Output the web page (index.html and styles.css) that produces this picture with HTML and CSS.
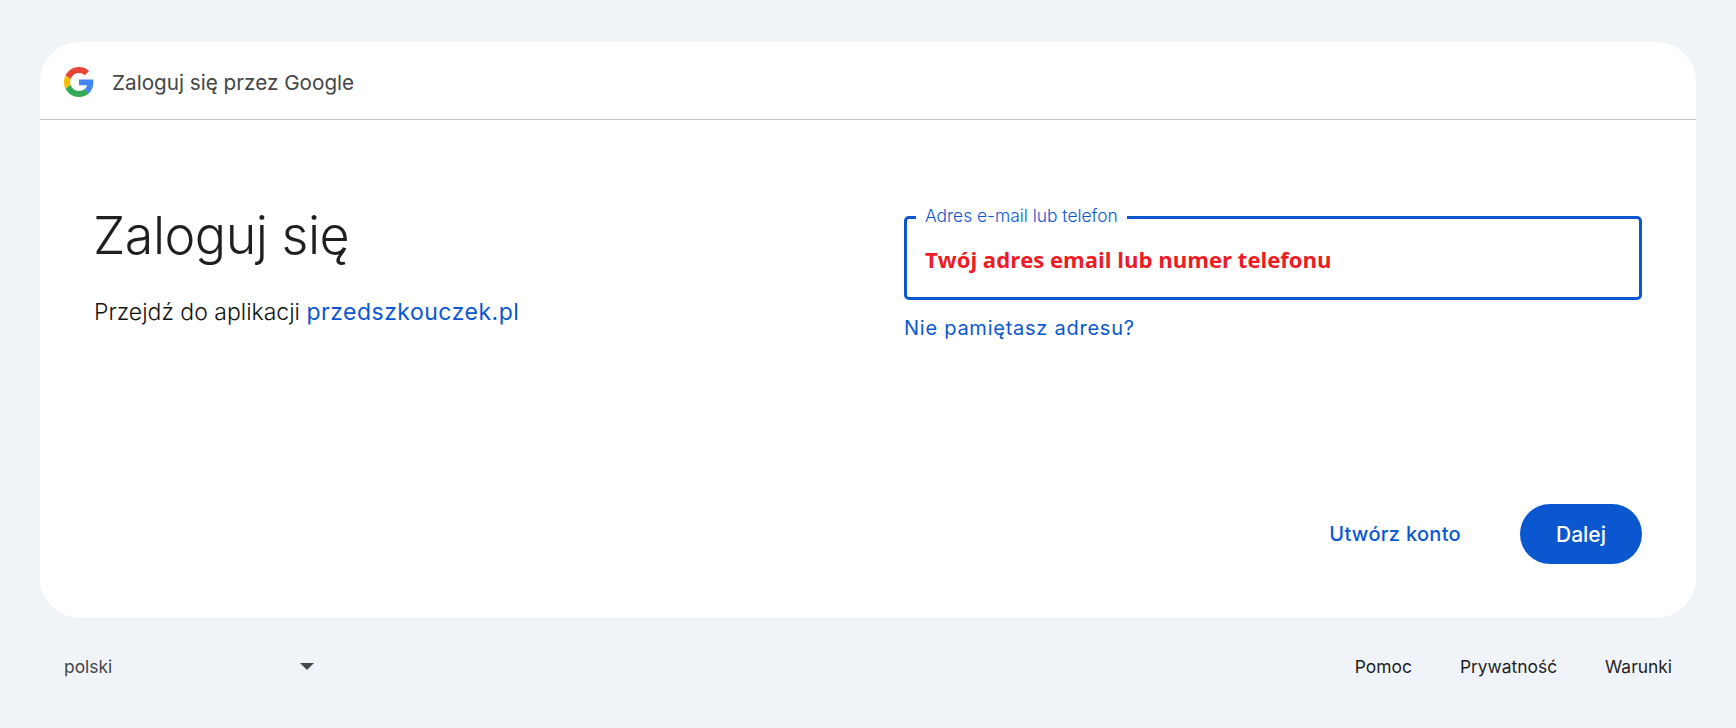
FILE: index.html
```html
<!DOCTYPE html>
<html lang="pl">
<head>
  <meta charset="UTF-8" />
  <meta name="viewport" content="width=device-width, initial-scale=1.0" />
  <title>Zaloguj się</title>
  <link rel="stylesheet" href="styles.css">
</head>
<body>
  <div class="card">
    <div class="card-header">
      <svg class="logo" viewBox="0 0 48 48" aria-hidden="true">
        <path fill="#EA4335" d="M24 9.5c3.54 0 6.71 1.22 9.21 3.6l6.85-6.85C35.9 2.38 30.47 0 24 0 14.62 0 6.51 5.38 2.56 13.22l7.98 6.19C12.43 13.72 17.74 9.5 24 9.5z"/>
        <path fill="#4285F4" d="M46.98 24.55c0-1.57-.15-3.09-.38-4.55H24v9.02h12.94c-.58 2.96-2.26 5.48-4.78 7.18l7.73 6c4.51-4.18 7.09-10.36 7.09-17.65z"/>
        <path fill="#FBBC05" d="M10.53 28.59c-.48-1.45-.76-2.99-.76-4.59s.27-3.14.76-4.59l-7.98-6.19C.92 16.46 0 20.12 0 24c0 3.88.92 7.54 2.56 10.78l7.97-6.19z"/>
        <path fill="#34A853" d="M24 48c6.48 0 11.93-2.13 15.89-5.81l-7.73-6c-2.15 1.45-4.92 2.3-8.16 2.3-6.26 0-11.57-4.22-13.47-9.91l-7.98 6.19C6.51 42.62 14.62 48 24 48z"/>
      </svg>
      <span class="header-title">Zaloguj się przez Google</span>
    </div>

    <div class="card-body">
      <div class="columns">
        <div class="intro">
          <h1>Zaloguj się</h1>
          <p class="subtitle">Przejdź do aplikacji <a href="#" class="app-link">przedszkouczek.pl</a></p>
        </div>
        <div class="form">
          <div class="field">
            <label class="field-label" for="email">Adres e-mail lub telefon</label>
            <span class="field-hint" id="email">Twój adres email lub numer telefonu</span>
          </div>
          <a href="#" class="forgot">Nie pamiętasz adresu?</a>
        </div>
      </div>
      <div class="actions">
        <a href="#" class="create">Utwórz konto</a>
        <button class="next">Dalej</button>
      </div>
    </div>
  </div>

  <div class="footer">
    <div class="lang">
      <span>polski</span>
      <span class="arrow"></span>
    </div>
    <div class="footer-links">
      <a href="#">Pomoc</a>
      <a href="#">Prywatność</a>
      <a href="#">Warunki</a>
    </div>
  </div>
</body>
</html>
```

FILE: styles.css
```css
body {
  background-color: #f0f4f9;
  font-family: Inter, Roboto, sans-serif;
  color: #1f1f1f;
  margin: 0;
  padding: 42px 40px 0;
  height: 728px;
  box-sizing: border-box;
  overflow: hidden;
}

a {
  text-decoration: none;
  color: #0b57d0;
}

.card {
  background-color: white;
  border-radius: 40px;
  height: 576px;
  display: flex;
  flex-direction: column;
}

.card-header {
  height: 77px;
  border-bottom: 1px solid #c7c7c7;
  display: flex;
  align-items: center;
  padding-left: 24px;
  gap: 18px;
}

.logo {
  width: 30px;
  height: 30px;
  margin-top: 2px;
}

.header-title {
  font-size: 20.7px;
  color: #444746;
  margin-top: 3px;
}

.card-body {
  flex: 1;
  padding: 82px 54px 54px 53px;
  display: flex;
  flex-direction: column;
  justify-content: space-between;
}

.columns {
  display: flex;
}

.intro {
  width: 811px;
}

h1 {
  font-size: 52px;
  font-weight: 300;
  letter-spacing: -0.5px;
  line-height: 68px;
  margin: 0;
}

.subtitle {
  font-size: 23px;
  font-weight: 350;
  color: #111;
  line-height: 30px;
  margin: 27px 0 0 1px;
}

.app-link {
  font-weight: 400;
  color: #0b57d0;
  letter-spacing: 0.5px;
}

.form {
  flex: 1;
  display: flex;
  flex-direction: column;
  align-items: flex-start;
  padding-top: 14px;
}

.field {
  position: relative;
  width: 100%;
  height: 84px;
  border: 3px solid #0b57d0;
  border-radius: 5px;
  box-sizing: border-box;
  display: flex;
  align-items: center;
  padding-left: 18px;
}

.field-label {
  position: absolute;
  top: -13px;
  left: 9px;
  padding: 0 9px;
  background-color: white;
  font-size: 17.4px;
  font-weight: 350;
  line-height: 20px;
  color: #0b57d0;
}

.field-hint {
  font-family: "Open Sans", sans-serif;
  font-size: 22.1px;
  font-weight: 700;
  color: #ed1c24;
  margin-top: 2px;
}

.forgot {
  font-size: 20px;
  font-weight: 400;
  letter-spacing: 0.75px;
  line-height: 28px;
  margin-top: 14px;
}

.actions {
  display: flex;
  justify-content: flex-end;
  align-items: center;
  gap: 59px;
}

.create {
  font-size: 20px;
  font-weight: 500;
  letter-spacing: 0.3px;
}

.next {
  width: 122px;
  height: 60px;
  border: none;
  border-radius: 30px;
  background-color: #0b57d0;
  color: white;
  font-family: inherit;
  font-size: 21px;
  font-weight: 500;
  cursor: pointer;
}

.footer {
  display: flex;
  justify-content: space-between;
  align-items: center;
  height: 96px;
  padding: 0 24px;
  font-size: 17.4px;
}

.lang {
  width: 250px;
  display: flex;
  justify-content: space-between;
  align-items: center;
  color: #444746;
}

.arrow {
  width: 0;
  height: 0;
  border-left: 7px solid transparent;
  border-right: 7px solid transparent;
  border-top: 7px solid #444746;
}

.footer-links {
  display: flex;
  gap: 48px;
}

.footer-links a {
  color: #1f1f1f;
}
```
